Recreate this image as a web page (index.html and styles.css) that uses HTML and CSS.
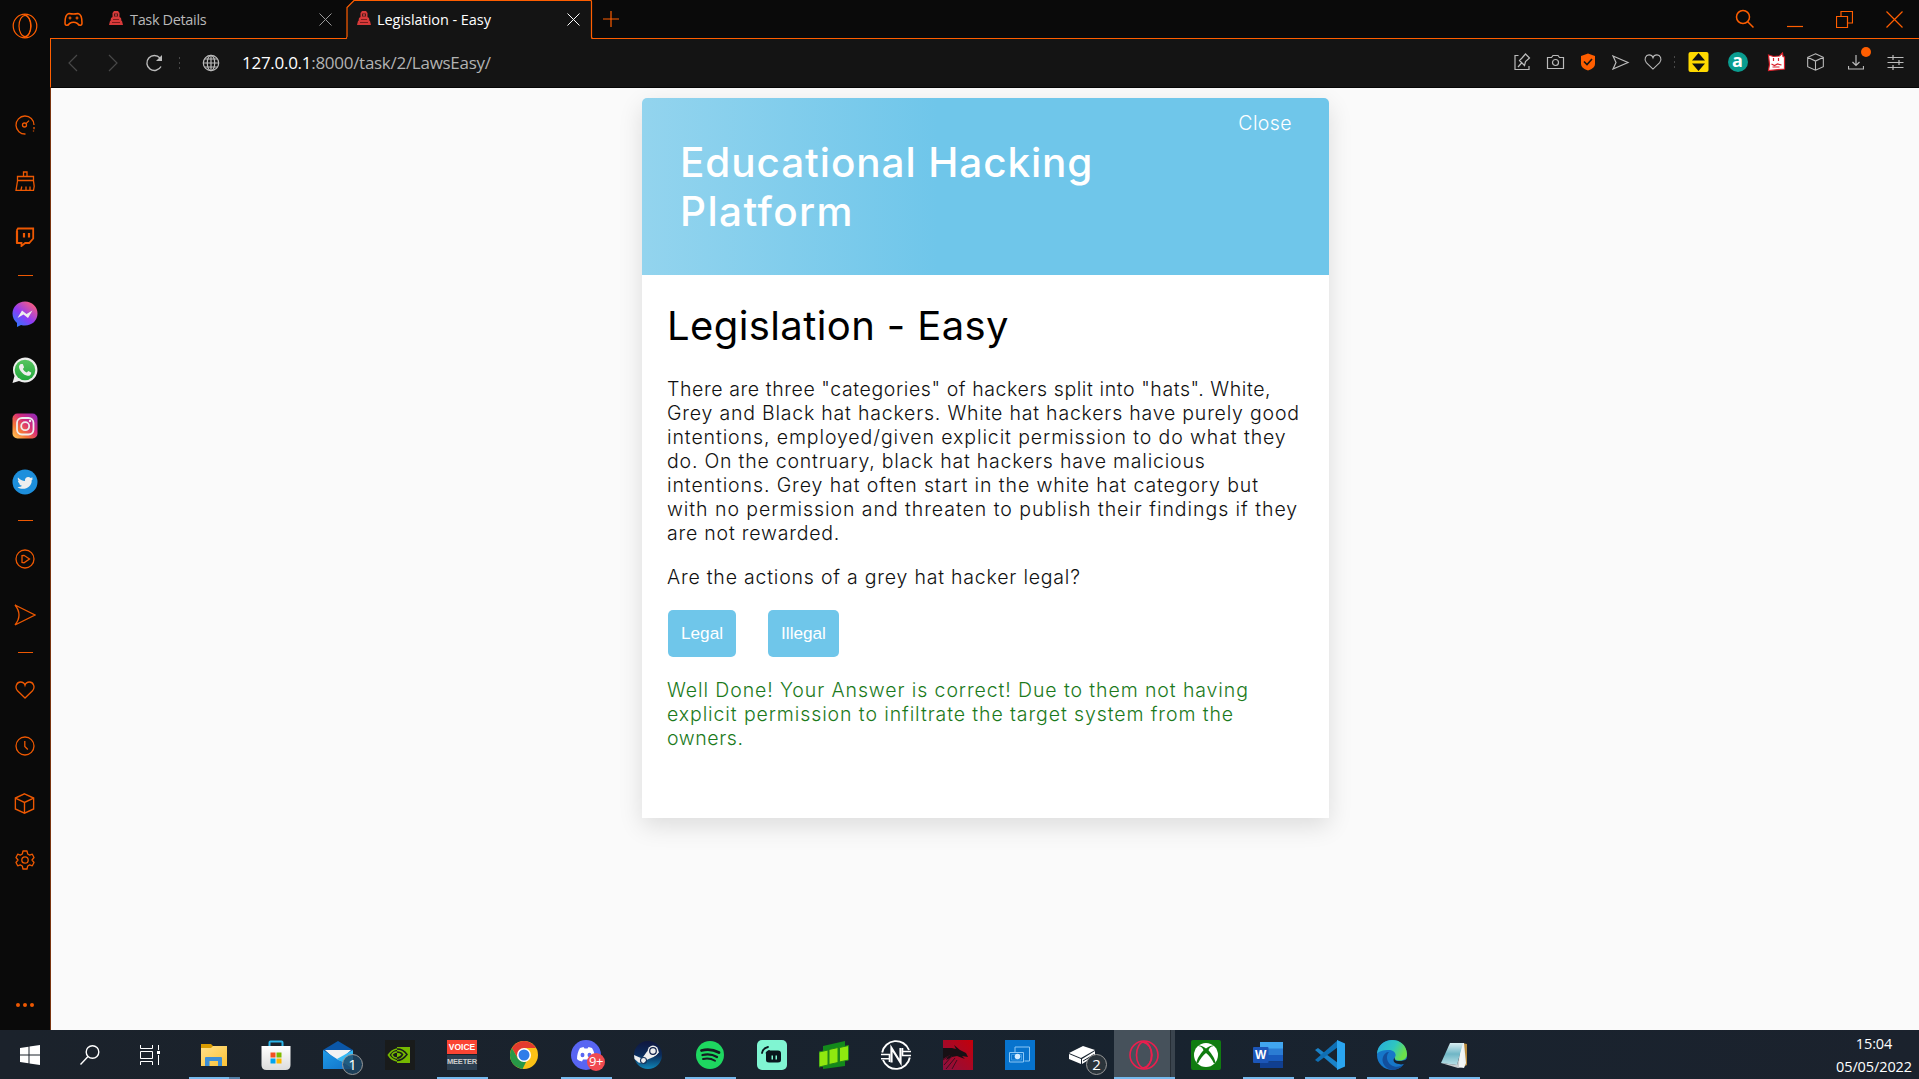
FILE: index.html
```html
<!DOCTYPE html>
<html lang="en">
<head>
<meta charset="utf-8">
<title>Legislation - Easy</title>
<link rel="stylesheet" href="styles.css">
</head>
<body>
<svg class="defs" width="0" height="0">
  <defs>
    <linearGradient id="msg" x1="0" y1="1" x2=".8" y2="0"><stop offset="0" stop-color="#1585ff"/><stop offset=".5" stop-color="#8f3bf5"/><stop offset="1" stop-color="#ff5f78"/></linearGradient>
    <linearGradient id="wa" x1="0" y1="0" x2="0" y2="1"><stop offset="0" stop-color="#57c45f"/><stop offset="1" stop-color="#22a83c"/></linearGradient>
    <linearGradient id="ig" x1="0" y1="1" x2="1" y2="0"><stop offset="0" stop-color="#ffd25e"/><stop offset=".3" stop-color="#f77737"/><stop offset=".6" stop-color="#d62b7a"/><stop offset="1" stop-color="#8a2bc0"/></linearGradient>
    <linearGradient id="edge" x1="0" y1="0" x2="1" y2=".4"><stop offset="0" stop-color="#27a9e0"/><stop offset=".6" stop-color="#2fc6c0"/><stop offset="1" stop-color="#6be04a"/></linearGradient>
    <linearGradient id="steam" x1="0" y1="0" x2="0" y2="1"><stop offset="0" stop-color="#10163f"/><stop offset=".5" stop-color="#0b2b5a"/><stop offset="1" stop-color="#0f86b8"/></linearGradient>
    <linearGradient id="dragon" x1="0" y1="1" x2="1" y2="0"><stop offset="0" stop-color="#8c1040"/><stop offset="1" stop-color="#c4000a"/></linearGradient>
    <linearGradient id="note" x1="0" y1="0" x2="0" y2="1"><stop offset="0" stop-color="#d9eef2"/><stop offset=".5" stop-color="#6fb6c6"/><stop offset="1" stop-color="#b9e0e6"/></linearGradient>
    <linearGradient id="env" x1="0" y1="0" x2="1" y2="1"><stop offset="0" stop-color="#1f9be8"/><stop offset="1" stop-color="#1170c6"/></linearGradient>
    <linearGradient id="fold" x1="0" y1="0" x2="1" y2="1"><stop offset="0" stop-color="#ffe08a"/><stop offset="1" stop-color="#fcc235"/></linearGradient>
    <linearGradient id="bag" x1="0" y1="0" x2="0" y2="1"><stop offset="0" stop-color="#fff"/><stop offset="1" stop-color="#dcdcdc"/></linearGradient>
    <symbol id="favicon" viewBox="0 0 14 16"><path fill="#d83a3a" d="M5 1h4l1.500 2v4l1.500 1 .5 3h.5l1 4H0l1-4h.5L2 8l1.500-1V3z"/><path fill="#5b1414" d="M5 3.500h4v3H5z"/><path fill="#e86a6a" d="M6 4.500h2v1H6z"/><path stroke="#7d1c1c" fill="none" d="M4 9.500h6M3 12.500h8"/></symbol>
    <symbol id="cube" viewBox="0 0 20 20"><path d="M10 .8l8.700 4v10.400l-8.700 4-8.700-4V4.800zM1.300 4.800l8.700 4.200 8.700-4.200M10 9v10.200"/></symbol>
    <symbol id="heart" viewBox="0 0 20 18"><path d="M10 17L2.500 9.800C-.8 5.800 2 1 5.500 1 8 1 9.500 2.500 10 4.200 10.500 2.500 12 1 14.500 1c3.500 0 6.300 4.800 3 8.800z"/></symbol>
    <symbol id="plane" viewBox="0 0 22 22"><path d="M1 1l20 10L1 21q8-10 0-20z"/></symbol>
  </defs>
</svg>

<div class="desktop">
  <div class="browser">
    <nav class="sidebar line">
      <div class="side-logo"><svg width="26" height="26" viewBox="0 0 26 26"><circle cx="13" cy="13" r="11.800"/><ellipse cx="13" cy="13" rx="6" ry="10.500"/><path d="M12 1.500C21 3 21 23 12 24.500"/></svg></div>
      <div class="side-item"><svg width="20" height="20" viewBox="0 0 20 20"><path d="M10.500 19A9 9 0 1 1 19 10M19 12v2.200M18.500 15.500v1" /><circle cx="9.500" cy="10" r="2"/><path d="M11 8.600l3-3"/></svg></div>
      <div class="side-item"><svg width="20" height="20" viewBox="0 0 20 20"><path d="M8.500 5.500V1h3.500v4.500M2.500 9.500v-4h16v4zM2.500 10L1 19.300h17.500l.7-4-.7-5.500M6 19l.8-3.500M11 19v-3.500M15 19v-3.500"/></svg></div>
      <div class="side-item"><svg width="20" height="20" viewBox="0 0 20 20"><path stroke-width="1.800" d="M3 1.500h15.200v10l-4 4.500h-4L6.500 19v-3H2V3z"/><path stroke-width="2.200" d="M9 6v4.500M14 6v4.500M2 4v12"/></svg></div>
      <div class="side-sep"></div>
      <div class="side-item brand"><svg width="26" height="26" viewBox="0 0 26 26"><path fill="url(#msg)" d="M13 .5c7 0 12.500 5 12.500 12S20 24.500 13 24.500c-1.500 0-2.500 0-4-.5l-4 2v-4C2 19.500.5 16.500.5 12.500.5 5.500 6 .5 13 .5z"/><path fill="#eee" d="M5.500 17l4.500-7.500 4.500 3.500 6-3.500-4.500 7.500-4.500-3.500z"/></svg></div>
      <div class="side-item brand"><svg width="26" height="26" viewBox="0 0 26 26"><path fill="#eee" d="M13 .5a12.500 12.500 0 1 1-6 23.500L.5 26l2-7A12.500 12.500 0 0 1 13 .5z"/><circle cx="13" cy="13" r="10.300" fill="url(#wa)"/><path fill="#eee" d="M8.800 7h2l1.300 3.300-1.200 1.600c1 2 2.400 3 4 3.600l1.300-1.500 3 1.400c.3 2-1.700 3.700-3.700 3.400C11.500 18 7.500 14 7 10c0-1.500.8-2.500 1.800-3z"/></svg></div>
      <div class="side-item brand"><svg width="26" height="26" viewBox="0 0 26 26"><rect x=".5" y=".5" width="25" height="25" rx="5" fill="url(#ig)"/><g fill="none" stroke="#eee" stroke-width="1.800"><rect x="5" y="5" width="16.500" height="16.500" rx="5"/><circle cx="13.200" cy="13.200" r="4"/></g><circle cx="18" cy="8" r="1.200" fill="#eee"/></svg></div>
      <div class="side-item brand"><svg width="26" height="26" viewBox="0 0 26 26"><circle cx="13" cy="13" r="12.500" fill="#1d8fdc"/><path fill="#eee" d="M6 8.500c2 2.300 4.400 3.300 7 3.400-.5-3.500 3.300-5.200 5.700-3l2-.7-1 1.600 1.600-.3-1.600 1.700c.3 5.300-4.200 8.600-8.700 8.600-2 0-4-.5-5.500-1.600 2 0 3.300-.4 4.500-1.400-1.500-.2-2.500-1-3-2.200h1.300c-1.500-.6-2.400-1.600-2.400-3.200l1.200.3C5.800 10.700 5.500 9.700 6 8.500z"/></svg></div>
      <div class="side-sep"></div>
      <div class="side-item"><svg width="20" height="20" viewBox="0 0 20 20"><circle cx="10" cy="10" r="9"/><path d="M7 6.500v7l2 .300 5.500-3.800L9 6.300z"/></svg></div>
      <div class="side-item"><svg width="22" height="22"><use href="#plane"/></svg></div>
      <div class="side-sep short"></div>
      <div class="side-item"><svg width="20" height="18"><use href="#heart"/></svg></div>
      <div class="side-item"><svg width="20" height="20" viewBox="0 0 20 20"><circle cx="10" cy="10" r="9"/><path d="M9.800 5v5.500l3 3"/></svg></div>
      <div class="side-item tall"><svg width="21" height="21"><use href="#cube"/></svg></div>
      <div class="side-item"><svg width="20" height="20" viewBox="0 0 20 20"><circle cx="10" cy="10" r="3.200"/><path d="M8 1h4l.7 3 2 1.100 2.600-.9 1.700 3.300-2 2.500 2 2.500-1.700 3.300-2.600-.9-2 1.100-.7 3H8l-.7-3-2-1.100-2.600.9L1 12.500 3 10 1 7.500l1.700-3.300 2.600.9 2-1.100z" stroke-linejoin="round"/></svg></div>
      <div class="side-more"><i></i><i></i><i></i></div>
    </nav>

    <div class="window">
      <header class="tabbar line">
        <div class="gx"><svg width="19" height="15" viewBox="0 0 19 15"><path stroke-width="1.500" d="M5 1.500q4.500 1 9 0c3 .5 4 6 4 9.500 0 3-3 3-4.500.5Q9.500 9 5.500 11.500C4 14 1 14 1 11c0-3.500 1-9 4-9.500z"/><path d="M4.500 6h3M6 4.500v3M11.500 6h1M13.500 6h1M13 4.500v3"/></svg></div>
        <div class="tab"><svg class="fav" width="14" height="16"><use href="#favicon"/></svg><span class="t1">Task Details</span><svg class="x" width="13" height="13" viewBox="0 0 13 13"><path d="M.5.5l12 12M12.500.5l-12 12"/></svg></div>
        <div class="tab active"><svg class="edge" width="247" height="39" viewBox="0 0 247 39"><path fill="#141414" stroke="#ff5e00" d="M0 38.500q1-.5 1-2V7.500l7-7h236.500q1 0 1 1v35q0 2 1.500 2"/><path fill="#141414" stroke="none" d="M1.500 37h243.500v2H1z"/></svg><svg class="fav" width="14" height="16"><use href="#favicon"/></svg><span class="t2">Legislation - Easy</span><svg class="x" width="13" height="13" viewBox="0 0 13 13"><path d="M.5.5l12 12M12.500.5l-12 12"/></svg></div>
        <div class="plus"><svg width="16" height="16" viewBox="0 0 16 16"><path d="M8 0v16M0 8h16"/></svg></div>
        <div class="winbtns">
          <svg width="20" height="20" viewBox="0 0 20 20"><circle cx="8" cy="8" r="6.500" stroke-width="1.500"/><path stroke-width="1.500" d="M12.500 12.500l6 6"/></svg>
          <svg width="16" height="20" viewBox="0 0 16 20"><path d="M0 17.500h16"/></svg>
          <svg width="17" height="17" viewBox="0 0 17 17"><path d="M.5 5.500h11v11H.5zM5 5V.5h11.500V12H12"/></svg>
          <svg width="17" height="17" viewBox="0 0 17 17"><path d="M.5.5l16 16M16.500.5l-16 16"/></svg>
        </div>
      </header>

      <div class="toolbar line">
        <div class="nav-ic dim"><svg width="10" height="18" viewBox="0 0 10 18"><path d="M9 1L1 9l8 8"/></svg><svg width="10" height="18" viewBox="0 0 10 18"><path d="M1 1l8 8-8 8"/></svg></div>
        <svg class="reload" width="18" height="18" viewBox="0 0 18 18"><path stroke-width="1.400" d="M16 12.500A7.500 7.500 0 1 1 15 4"/><path fill="#bbb" stroke="none" d="M17 1v6h-6z"/></svg>
        <span class="dots"></span>
        <svg class="globe" width="18" height="18" viewBox="0 0 18 18"><circle cx="9" cy="9" r="7.700"/><ellipse cx="9" cy="9" rx="3.700" ry="7.700"/><path d="M1 9h16M9 1v16M2.500 5h13M2.500 13h13"/></svg>
        <span class="url"><b>127.0.0.1</b>:8000/task/2/LawsEasy/</span>
        <div class="tools">
          <svg class="w33" width="18" height="18" viewBox="0 0 18 18"><path d="M5 2.500H1.500v14h14V13M4.500 14l4-4.500M6 7.500l5 5 1-4 4-3.500-4-4-3.500 4z"/></svg>
          <svg class="w33" width="18" height="16" viewBox="0 0 18 16"><path d="M1 3.500h4l1.500-2h5l1.500 2h4v11H1z"/><circle cx="9" cy="8.500" r="3"/></svg>
          <svg class="w32" width="16" height="18" viewBox="0 0 16 18"><path fill="#ff5e00" stroke="none" d="M8 .5l7 2.500v8q0 4-7 6.500-7-2.500-7-6.500V3z"/><path stroke="#141414" stroke-width="1.600" d="M4 8.500l3 3 5-5.500"/></svg>
          <svg class="w33" width="17" height="15" viewBox="0 0 17 15"><path d="M1 1l15 6.500L1 14l3-6.500z"/></svg>
          <svg class="w32" width="18" height="16"><use href="#heart"/></svg>
          <span class="dots"></span>
          <svg class="w39" width="20" height="20" viewBox="0 0 20 20"><rect width="20" height="20" rx="2" fill="#ffd900" stroke="none"/><path stroke="none" fill="#111" d="M10 1l6.500 7.500h-13zM10 19l6.500-7.500h-13z"/></svg>
          <span class="w39 amz"><b>a</b></span>
          <svg class="w38" width="20" height="20" viewBox="0 0 20 20"><path fill="#fff" stroke="#d9212b" d="M2 3l5 1.500 6-.5 3-3 .5 3.500 1.500.5v12l-16 1.500 1-6z"/><path stroke="#d9212b" d="M7 6v3M12 6v3M5 12l3 1.500 3-1.500 4 1M6 15h7"/></svg>
          <svg class="w38" width="17" height="18"><use href="#cube"/></svg>
          <span class="w42 dl"><svg width="16" height="16" viewBox="0 0 16 16"><path d="M8 1v10M4.500 8L8 11.500 11.500 8M.5 12v3h15v-3"/></svg></span>
          <svg class="w38" width="16" height="16" viewBox="0 0 16 16"><path d="M0 3.500h16M0 8.500h16M0 13.500h16M5.500 1v5M11.500 6v5M5.500 11v5"/></svg>
        </div>
      </div>

      <main class="page">
        <section class="card">
          <div class="banner"><h1>Educational Hacking<br><span class="second">Platform</span></h1><a class="close">Close</a></div>
          <div class="content">
            <h2>Legislation - Easy</h2>
            <p><span class="tight">There are three "categories" of hackers split into "hats". White,</span><br><span class="mid">Grey and Black hat hackers. White hat hackers have purely good</span><br>intentions, employed/given explicit permission to do what they<br><span class="mid">do. On the contruary, black hat hackers have malicious</span><br>intentions. Grey hat often start in the white hat category but<br><span class="loose">with no permission and threaten to publish their findings if they</span><br><span class="mid">are not rewarded.</span></p>
            <p class="mid question">Are the actions of a grey hat hacker legal?</p>
            <div class="answers"><button class="legal">Legal</button><button class="illegal">Illegal</button></div>
            <p class="result">Well Done! Your Answer is correct! Due to them not having<br>explicit permission to infiltrate the target system from the<br><span class="tight">owners.</span></p>
          </div>
        </section>
      </main>
    </div>
  </div>

  <footer class="taskbar">
    <div class="sys"><svg width="20" height="20" viewBox="0 0 20 20"><path fill="#fff" d="M0 3l8.500-1.200v7.700H0zM9.500 1.600L20 0v9.500H9.500zM0 10.500h8.500v7.700L0 17zM9.500 10.500H20V20L9.500 18.400z"/></svg></div>
    <div class="sys"><svg width="20" height="20" viewBox="0 0 20 20"><g fill="none" stroke="#fff" stroke-width="1.400"><circle cx="12.500" cy="7" r="6.300"/><path d="M8 11.500L.5 19.500"/></g></svg></div>
    <div class="sys"><svg width="20" height="20" viewBox="0 0 20 20"><path fill="none" stroke="#fff" d="M.5 0v3.500h12V0M.5 6.500h12v7H.5zM.5 20v-3.500h12V20M18.500 0v5M18.500 10v10"/><path fill="#fff" d="M17 6h3v3h-3z"/></svg></div>
    <div class="app on split"><svg width="28" height="24" viewBox="0 0 28 24"><path fill="#d99b00" d="M1 1h10l2 2v3H1z"/><path fill="url(#fold)" d="M1 5h10l2-2h14v20H1z"/><path fill="#3d8fd6" d="M5 23v-8q0-1 1-1h15q1 0 1 1v8h-4v-5H9.500v5z"/></svg></div>
    <div class="app"><svg width="30" height="30" viewBox="0 0 30 30"><path fill="none" stroke="#2bb5ea" stroke-width="2" d="M8.500 7V2.500q0-1 1-1h11q1 0 1 1V7"/><path fill="url(#bag)" d="M.5 6h29v19q0 5-5 5h-19q-5 0-5-5z"/><path fill="#f25022" d="M9.500 12.500h5v5h-5z"/><path fill="#7fba00" d="M15.500 12.500h5v5h-5z"/><path fill="#00a4ef" d="M9.500 18.500h5v5h-5z"/><path fill="#ffb900" d="M15.500 18.500h5v5h-5z"/></svg></div>
    <div class="app"><svg width="30" height="30" viewBox="0 0 30 30"><path fill="#0b57a8" d="M0 10L15 1l15 9-15 11z"/><path fill="#f3f3f3" d="M2 10h26L15 22z"/><path fill="url(#env)" d="M0 10l14 9L30 29H0z"/><path fill="#35b9f4" d="M30 10v19L14 19z"/></svg><span class="badge one">1</span></div>
    <div class="app"><svg width="30" height="30" viewBox="0 0 30 30"><path fill="#191b1b" d="M0 0h30v30H0z"/><path fill="#76b900" d="M12 7h13v16H12z"/><path fill="none" stroke="#76b900" stroke-width="1.700" d="M12 9C8 10 5 12.500 3.500 15c2 3.500 5 5 8.500 6"/><path fill="none" stroke="#191b1b" stroke-width="1.500" d="M12 9c5 0 8 2.500 10 5.500-3 4-6 6-10 6"/><path fill="none" stroke="#76b900" stroke-width="1.500" d="M12 12c-3 0-5 2-5 3 1 2 3 3 5 3"/><path fill="none" stroke="#191b1b" stroke-width="1.500" d="M12 12c3 0 4.500 1 5.500 2.500C16 17 14 18 12 18"/></svg></div>
    <div class="app on"><div class="vm"><span>VOICE</span><span>MEETER</span></div></div>
    <div class="app"><svg width="28" height="28" viewBox="0 0 28 28"><circle cx="14" cy="14" r="14" fill="#fbc116"/><path fill="#e33b2e" d="M1.900 7A14 14 0 0 1 26.100 7H14v7l-6 3.500z"/><path fill="#279847" d="M1.900 7l6 10.500 6.100 3.500h2L12.500 28A14 14 0 0 1 1.900 7z"/><circle cx="14" cy="14" r="7" fill="#fff"/><circle cx="14" cy="14" r="5.500" fill="#2f7de9"/></svg></div>
    <div class="app on"><svg width="30" height="30" viewBox="0 0 30 30"><circle cx="15" cy="15" r="15" fill="#5865f2"/><path fill="#fff" d="M9 8l3.500-1 1 1.500h3L17.500 7 21 8c2 3 3 7 3 11-1.500 1.500-3 2-5 2.500l-1-2h-6l-1 2c-2-.5-3.500-1-5-2.500 0-4 1-8 3-11z"/><ellipse cx="11.500" cy="15" rx="2" ry="2.200" fill="#5865f2"/><ellipse cx="18.500" cy="15" rx="2" ry="2.200" fill="#5865f2"/></svg><span class="badge nine">9+</span></div>
    <div class="app"><svg width="28" height="28" viewBox="0 0 28 28"><circle cx="14" cy="14" r="14" fill="url(#steam)"/><path fill="#eee" d="M0 14l8 3.500 5-7 9-5 3 6-5.500 4.500-6 2.500-4 4-5-1L.5 18z"/><circle cx="19" cy="10" r="5.400" fill="#eee"/><circle cx="19" cy="10" r="3.300" fill="#eee" stroke="#10204a" stroke-width="1.200"/><circle cx="9.500" cy="19.500" r="3" fill="none" stroke="#17345c" stroke-width="1.100"/></svg></div>
    <div class="app on"><svg width="28" height="28" viewBox="0 0 28 28"><circle cx="14" cy="14" r="14" fill="#1ed760"/><g fill="none" stroke="#151b22" stroke-linecap="round"><path stroke-width="2.800" d="M5.500 9.500q9-2.500 17.500 2"/><path stroke-width="2.300" d="M6.500 14q8-2 14.500 2"/><path stroke-width="1.900" d="M7 18q6.500-1.500 12 1.700"/></g></svg></div>
    <div class="app"><svg width="30" height="30" viewBox="0 0 30 30"><rect width="30" height="30" rx="5" fill="#80f5d2"/><g fill="none" stroke="#09161d" stroke-width="1.800" stroke-linecap="round"><path d="M5 13q1-5 6-6M9.500 13q.5-1.500 2.500-2"/></g><path fill="#09161d" d="M11 10.500h10q3 0 3 3V20q0 2.500-3 2.500h-9Q9 22.500 9 20v-6z"/><path fill="#80f5d2" d="M14.500 15.500H16v4h-1.500zM18.500 15.500H20v4h-1.500z"/></svg></div>
    <div class="app"><svg width="30" height="28" viewBox="0 0 30 28"><path fill="#138a1b" d="M4 5l22-5v25L4 28z"/><path fill="#8fe80f" stroke="#23851a" d="M0 11l9-2v15l-9 2zM10 8.500l9-2v15l-9 2zM20.500 6.500l9-2v14.500l-9 2z"/></svg></div>
    <div class="app"><svg width="30" height="30" viewBox="0 0 30 30"><g fill="none" stroke="#fff" stroke-width="1.900"><path d="M1.200 12.500A14 14 0 0 1 28 10M28.800 17.500A14 14 0 0 1 2 20"/><path d="M0 14.500h8.500V22M0 18.800h8.500M30 11.500h-8.500M30 15.500h-8.500V8" stroke-width="1.600"/><path d="M10.500 22.500V8l9 14.500V8" stroke-width="2.200"/></g></svg></div>
    <div class="app"><svg width="30" height="30" viewBox="0 0 30 30"><path fill="url(#dragon)" d="M0 0h30v30H0z"/><path fill="#171014" d="M0 8l9 0 4 1-2-4 6 5 6 3 2 4-6-1 3 3-8-3-5 1-6 3 2-4-5 3z"/><path stroke="#3a0d1e" fill="none" d="M0 20l7-5M1 25l8-9M3 29l9-11M9 29l5-9"/></svg></div>
    <div class="app"><svg width="30" height="30" viewBox="0 0 30 30"><path fill="#0773cd" d="M0 0h30v30H0z"/><g fill="none" stroke="#8cc7f5"><path d="M10 12V7h14.500v14h-5M4.500 12.500h14v9.500h-14z"/><path d="M6.500 14.500h10v5.500h-10z" stroke="#3d9ae4"/></g><circle cx="12.500" cy="16.500" r="2.800" fill="#d5ecff"/></svg></div>
    <div class="app"><svg width="30" height="22" viewBox="0 0 30 22"><path fill="#fff" d="M2 9L16 2l12 4-14 8zM2 10l12 5v5L2 15zM15 15l13-8v5l-13 8z"/><path stroke="#17202b" d="M16 17l11-6.500"/></svg><span class="badge two">2</span></div>
    <div class="app on current"><svg width="30" height="30" viewBox="0 0 30 30"><g fill="none" stroke="#ea1f4e" stroke-width="1.600"><circle cx="15" cy="15" r="14"/><ellipse cx="15" cy="15" rx="7.500" ry="13"/><path d="M14 2c12 3 12 23 0 26"/></g></svg></div>
    <div class="app"><svg width="30" height="30" viewBox="0 0 30 30"><rect width="30" height="30" rx="2" fill="#107c10"/><circle cx="15" cy="15" r="12" fill="#fff"/><path fill="#107c10" d="M7 5.500C10 5 13 7 15 8.500 17 7 20 5 23 5.500l-1 .7c-2 0-4 2-4.500 4C21 14 24 19 24.500 22.500l-1.500 1C21 19 17.500 15 15 13c-2.500 2-6 6-8 10.500l-1.500-1C6 19 9 14 12.500 10.200c-.5-2-2.500-4-4.500-4z"/></svg></div>
    <div class="app on"><svg width="30" height="28" viewBox="0 0 30 28"><path fill="#41a5ee" d="M7 1h23v7H7z"/><path fill="#2b7cd3" d="M7 7.500h23V14H7z"/><path fill="#185abd" d="M7 14h23v6.500H7z"/><path fill="#103f91" d="M7 20.500h23V27H7z"/><rect y="6" width="15.500" height="16" rx="1" fill="#1c56b8"/><text class="word" x="7.700" y="18.200" text-anchor="middle">W</text></svg></div>
    <div class="app on"><svg width="30" height="30" viewBox="0 0 30 30"><path fill="#1a82c8" d="M0 10l3-2 20 15v6.500z"/><path fill="#0f6fb4" d="M0 20l3 2L23 7V0z"/><path fill="#2aa5f0" d="M22 0l8 3.500v23L22 30z"/></svg></div>
    <div class="app on"><svg width="30" height="30" viewBox="0 0 30 30"><circle cx="15" cy="15" r="15" fill="#1677c9"/><path fill="url(#edge)" d="M0 14C1-4 29-5 30 14c0 6-5 7-9 6.500-3-.5-4-2-3-3.500 2-3-1-7-6-7C6 10 2 11 0 14z"/><path fill="#124f9c" d="M12 12c-3 3-3 9 2 13 4 3 10 2 13-1-3 4-8 6-12 6C8 29 4 22 6 17c1-3 3-5 6-5z"/><path fill="#17212c" d="M18 17c-1 2 0 4 3 4 3 .4 6-.3 9-2v4l-3 1c-2 .5-4 .5-5 0-5 0-7-4-4-7z"/></svg></div>
    <div class="app on"><svg width="28" height="28" viewBox="0 0 28 28"><path fill="#b78a3c" d="M22 2l5 1v21l-4 2z"/><path fill="#eef3f3" d="M20 2h4l2 20-2 5-5-1z"/><path fill="url(#note)" d="M10 2h13l-6 22-16-2z"/><path fill="#f4f7f7" d="M1 22l16 2 6-20 1 22-6 1z" opacity=".8"/></svg></div>
    <div class="clock"><span>15:04</span><span>05/05/2022</span></div>
  </footer>
</div>
</body>
</html>
```

FILE: styles.css
```css
* { box-sizing: border-box; }
body { margin: 0; background: #fafafa; font-family: "Open Sans", "Noto Sans", sans-serif; overflow: hidden; }
.defs { position: absolute; }
svg { display: block; flex: none; }
.desktop { width: 1919px; height: 1079px; display: flex; flex-direction: column; }
.browser { flex: 1; display: flex; min-height: 0; background: #0a0a0a; }
.line svg { fill: none; stroke: #ff5e00; stroke-width: 1.2; }

/* sidebar */
.sidebar { width: 50px; display: flex; flex-direction: column; align-items: center; height: 1030px; }
.side-logo { height: 97px; padding-top: 13px; }
.side-item { height: 56px; display: flex; align-items: center; }
.side-item.tall { height: 58px; }
.sidebar .side-item svg { stroke: #ed5802; stroke-width: 1.3; }
.sidebar .brand svg { stroke: none; }
.sidebar .brand g { stroke: #eee; }
.side-item:not(.brand) { margin-right: 1px; }
.side-sep { width: 15px; height: 21px; display: flex; align-items: center; }
.side-sep::before { content: ""; height: 1px; width: 15px; background: #ed5802; }
.side-sep.short { height: 19px; }
.side-more { margin-top: auto; height: 50px; display: flex; align-items: center; gap: 3px; }
.side-more i { width: 4px; height: 4px; border-radius: 50%; background: #ed5802; }

.window { flex: 1; min-width: 0; display: flex; flex-direction: column; }

/* tab strip */
.tabbar { height: 39px; display: flex; align-items: stretch; border-bottom: 1px solid #ff5e00; }
.gx { width: 48px; display: flex; align-items: center; padding-left: 14px; }
.tab { height: 39px; width: 248px; display: flex; align-items: center; padding-left: 11px; color: #b9b9b9; font-size: 14.500px; position: relative; white-space: nowrap; }
.tabbar .fav { stroke: none; margin-right: 7px; margin-top: -3px; z-index: 1; }
.tab span { z-index: 1; }
.tabbar .x { margin-left: auto; margin-right: 14px; stroke: #999; stroke-width: 1; z-index: 1; }
.tab.active { width: 246px; color: #fff; }
.tabbar .active .x { stroke: #fff; margin-right: 12px; }
.tab .edge { position: absolute; left: 0; top: 0; stroke-width: 1.2; }
.t1 { letter-spacing: -.35px; }
.t2 { letter-spacing: -.05px; margin-left: -1px; }
.plus { display: flex; align-items: center; padding-left: 11px; }
.winbtns { margin-left: auto; display: flex; align-items: center; margin-right: 16px; gap: 33px; }
.winbtns svg:first-child { margin-top: -1px; margin-right: -1px; }

/* address bar */
.toolbar { height: 49px; background: #141414; border-left: 1px solid #ff5e00; border-bottom: 1px solid #060606; display: flex; align-items: center; }
.toolbar svg { stroke: #bbb; }
.nav-ic { display: flex; gap: 30px; padding-left: 17px; }
.toolbar .dim svg { stroke: #484848; }
.reload { margin-left: 27px; margin-top: -1px; }
.dots { width: 1px; height: 12px; background: repeating-linear-gradient(#484848 0 2px, transparent 2px 5px); }
.toolbar > .dots { margin-left: 16px; }
.globe { margin-left: 22px; margin-top: -1px; }
.url { margin: -2px 0 0 22px; font-size: 17px; letter-spacing: -.28px; color: #b2b2b2; }
.url b { font-weight: 400; color: #fff; }
.tools { margin-left: auto; display: flex; align-items: center; height: 48px; padding-right: 4px; margin-top: -2px; }
.tools .w33 { width: 33px; }
.tools .w32 { width: 32px; }
.tools .w38 { width: 39px; }
.tools .w39 { width: 39px; }
.w42 { width: 41px; }
.tools .dots { margin: 0 4px 0 5px; }
.amz { display: flex; justify-content: center; }
.amz b { width: 20px; height: 20px; border-radius: 50%; background: #0a9d90; color: #fff; font-size: 18px; line-height: 17px; text-align: center; }
.dl { display: flex; justify-content: center; position: relative; }
.dl::after { content: ""; position: absolute; left: 26px; top: -7px; width: 10px; height: 10px; border-radius: 50%; background: #ff5e00; }

/* page */
.page { flex: 1; background: #fafafa; border-left: 1px solid #7a3510; padding-top: 10px; display: flex; justify-content: center; align-items: flex-start; font-family: Inter, sans-serif; }
.card { width: 687px; height: 720px; margin-left: 1px; background: #fff; border-radius: 5px 5px 0 0; box-shadow: 0 8px 24px rgba(0,0,0,.12); }
.banner { height: 177px; border-radius: 5px 5px 0 0; background: linear-gradient(90deg, #93d4ee, #6fc6ea 43%); color: #fff; display: flex; justify-content: space-between; padding: 0 37px 0 38px; }
.banner h1 { margin: 40px 0 0; font-size: 40.500px; line-height: 49px; font-weight: 500; letter-spacing: .9px; white-space: nowrap; }
.second { letter-spacing: 1.4px; }
.close { margin-top: 13px; font-size: 19.500px; line-height: 24px; font-weight: 300; letter-spacing: .4px; }
.content { padding: 26px 0 0 25px; color: #111; white-space: nowrap; }
.content h2 { margin: 0 0 27px; font-size: 40px; line-height: 49px; font-weight: 400; color: #000; letter-spacing: .4px; }
.content p { margin: 0 0 20px; font-size: 19.500px; line-height: 24px; font-weight: 300; letter-spacing: .9px; }
.content .mid { letter-spacing: .79px; }
.content .tight { letter-spacing: .59px; }
.content .loose { letter-spacing: .95px; }
.answers { display: flex; gap: 32px; margin: 21px 0 21px 1px; }
.answers button { height: 47px; border: 0; border-radius: 5px; padding: 0; background: #6fc6ea; color: #fff; font: 17.200px "Liberation Sans", Arial, sans-serif; }
.legal { width: 68px; }
.illegal { width: 71px; }
.content .result { color: #1c7a1c; }

/* taskbar */
.taskbar { height: 49px; background: linear-gradient(90deg, #1b222b, #18232f 60%, #1b222d); display: flex; }
.sys { width: 60px; display: flex; align-items: center; justify-content: center; }
.app { width: 62px; display: flex; align-items: center; justify-content: center; position: relative; }
.sys:nth-child(3) { margin-right: 3px; }
.app.on::after { content: ""; position: absolute; bottom: 0; left: 6px; width: 51px; height: 2px; background: #76b9ed; }
.app.split::after { background: linear-gradient(90deg, #76b9ed 40px, #537fa6 40px); }
.app.current { background: linear-gradient(90deg, transparent 1px, #46515b 1px 57px, #262e36 57px 58px, #3a444e 58px); }
.app.current::after { left: 1px; width: 61px; }
.badge { position: absolute; width: 21px; height: 21px; border-radius: 50%; border: 1px solid #999; background: #2b343b; color: #fff; font-size: 15px; line-height: 19px; text-align: center; left: 35px; top: 24px; }
.badge.nine { left: 32px; top: 23px; width: 18px; height: 18px; background: #f04a50; border: 0; font-size: 13px; line-height: 17px; letter-spacing: -.5px; }
.badge.two { left: 35px; }
.badge.one { background: rgba(30, 70, 100, .8); }
.vm { width: 30px; height: 30px; display: flex; flex-direction: column; gap: 1px; font: bold 8.500px/14.500px "Liberation Sans", sans-serif; color: #fff; text-align: center; }
.vm span { flex: 1; background: #fb4433; }
.vm span + span { background: #2c3e50; font-size: 7.500px; letter-spacing: -.2px; color: #ccc; }
.word { font: bold 12px "Liberation Sans", sans-serif; fill: #fff; }
.clock { margin-left: auto; width: 90px; display: flex; flex-direction: column; align-items: center; color: #fff; font-size: 14.500px; line-height: 23px; padding-top: 2px; letter-spacing: -.1px; }
```
